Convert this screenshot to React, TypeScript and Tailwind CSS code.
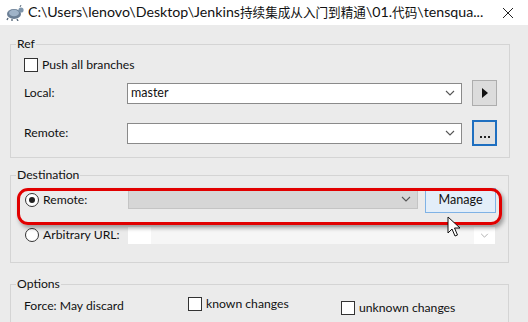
import React from "react";

const font = { fontFamily: 'Lato, "Noto Sans CJK SC", sans-serif' };

function Chevron() {
  return (
    <svg width="10" height="6" viewBox="0 0 10 6" className="shrink-0">
      <path d="M1 1 L5 5 L9 1" fill="none" stroke="#555" strokeWidth="1.1" />
    </svg>
  );
}

function Checkbox() {
  return <div className="w-[14px] h-[14px] border border-[#333] bg-white shrink-0" />;
}

function Radio({ checked }: { checked?: boolean }) {
  return (
    <div className="w-[14px] h-[14px] rounded-full border border-[#333] bg-white shrink-0 flex items-center justify-center">
      {checked && <div className="w-[6px] h-[6px] rounded-full bg-[#222]" />}
    </div>
  );
}

function Combo({ value, w, disabled }: { value?: string; w: string; disabled?: boolean }) {
  return (
    <div
      className={`${w} h-[21px] border flex items-center justify-between pl-[3px] pr-[6px] ${
        disabled ? "bg-[#d6d6d6] border-[#c4c4c4]" : "bg-white border-[#8a8a8a]"
      }`}
    >
      <span className="text-[12.5px] text-[#111] leading-none">{value}</span>
      <Chevron />
    </div>
  );
}

function Cjk({ children }: { children: React.ReactNode }) {
  return <span className="text-[12.6px]">{children}</span>;
}

export default function App() {
  return (
    <div className="w-[528px] h-[322px] bg-[#ebebeb] overflow-hidden text-[#111] text-[12.2px]" style={font}>
      {/* title bar */}
      <div className="h-[25px] bg-white flex items-center pl-[5px] pr-[14px]">
        <svg width="20" height="16" viewBox="0 0 20 16" className="shrink-0">
          <ellipse cx="9" cy="9" rx="7" ry="5" fill="#6b7f95" />
          <ellipse cx="9" cy="8" rx="5" ry="3.2" fill="#9fb3c8" />
          <circle cx="16" cy="5" r="2.6" fill="#7d94aa" />
          <path d="M3 13 L2 15 M7 14 L7 16 M12 14 L13 16" stroke="#5a6b7d" strokeWidth="1.4" />
          <path d="M15 2 L16 0" stroke="#5a6b7d" strokeWidth="1" />
        </svg>
        <span className="ml-[3px] text-[14.2px] text-[#111] whitespace-nowrap leading-none flex-1">
          C:\Users\lenovo\Desktop\Jenkins<Cjk>持续集成从入门到精通</Cjk>\01.<Cjk>代码</Cjk>\tensqua...
        </span>
        <svg width="12" height="12" viewBox="0 0 12 12" className="shrink-0 ml-[8px]">
          <path d="M1 1 L11 11 M11 1 L1 11" stroke="#222" strokeWidth="1" />
        </svg>
      </div>

      {/* Ref */}
      <fieldset className="ml-[10px] mt-[11px] w-[499px] border border-[#d4d4d4] pl-[13px] pr-[12px] pt-[5px] pb-[11px]">
        <legend className="-ml-[8px] px-[1px] leading-[16px]">Ref</legend>
        <div className="h-[16px] flex items-center gap-[4px]">
          <Checkbox />
          <span className="leading-none">Push all branches</span>
        </div>
        <div className="mt-[7px] h-[26px] flex items-center">
          <span className="w-[103px] leading-none">Local:</span>
          <Combo value="master" w="w-[335px]" />
          <div className="ml-[10px] w-[25px] h-[26px] bg-[#dcdcdc] border border-[#adadad] flex items-center justify-center">
            <svg width="6" height="10" viewBox="0 0 6 10">
              <path d="M0 0 L6 5 L0 10 Z" fill="#111" />
            </svg>
          </div>
        </div>
        <div className="mt-[14px] h-[26px] flex items-center">
          <span className="w-[103px] leading-none">Remote:</span>
          <Combo w="w-[335px]" />
          <div className="ml-[10px] w-[25px] h-[26px] bg-[#e1e1e1] border-2 border-[#1e6fc0] flex items-end justify-center gap-[2px] pb-[6px]">
            <div className="w-[2px] h-[2px] bg-[#222]" />
            <div className="w-[2px] h-[2px] bg-[#222]" />
            <div className="w-[2px] h-[2px] bg-[#222]" />
          </div>
        </div>
      </fieldset>

      {/* Destination */}
      <fieldset className="relative ml-[10px] mt-[9px] w-[499px] border border-[#d4d4d4] pl-[14px] pr-[12px] pt-[4px] pb-[18px]">
        <legend className="-ml-[9px] px-[1px] leading-[16px]">Destination</legend>
        <div className="h-[26px] flex items-center">
          <Radio checked />
          <span className="ml-[4px] w-[85px] leading-none whitespace-nowrap">Remote:</span>
          <div className="self-start mt-[1px]">
            <Combo w="w-[290px]" disabled />
          </div>
          <div className="ml-[7px] w-[71px] h-[25px] bg-[#e3eef9] border border-[#7fb2e5] flex items-center justify-center text-[12.6px] leading-none">
            Manage
          </div>
        </div>
        <div className="mt-[13px] h-[18px] flex items-center">
          <Radio />
          <span className="ml-[4px] w-[85px] leading-none whitespace-nowrap">Arbitrary URL:</span>
          <div className="w-[367px] h-[17px] flex items-center">
            <div className="w-[23px] h-full bg-white" />
            <div className="flex-1 h-full bg-[#f6f6f6]" />
            <div className="w-[21px] h-full bg-white flex items-center justify-center">
              <svg width="9" height="5" viewBox="0 0 10 6">
                <path d="M1 1 L5 5 L9 1" fill="none" stroke="#aaa" strokeWidth="1.1" />
              </svg>
            </div>
          </div>
        </div>
        {/* red highlight */}
        <div className="absolute left-[6px] top-[5px] w-[485px] h-[37px] rounded-[11px] border-[3px] border-[#e10000] shadow-[2px_3px_4px_rgba(0,0,0,0.35)] pointer-events-none" />
        {/* cursor */}
        <svg className="absolute left-[436px] top-[33px]" width="14" height="22" viewBox="0 0 14 22">
          <path d="M1 1 L1 17 L5 13 L8 20 L10.5 19 L7.5 12 L13 12 Z" fill="white" stroke="#111" strokeWidth="1" strokeLinejoin="round" />
        </svg>
      </fieldset>

      {/* Options */}
      <fieldset className="ml-[10px] mt-[13px] w-[499px] border border-[#d4d4d4] pl-[13px] pr-[12px] pt-[5px] pb-[10px]">
        <legend className="-ml-[8px] px-[1px] leading-[16px]">Options</legend>
        <div className="h-[18px] flex items-start">
          <span className="w-[164px] leading-[16px] mt-[1px]">Force: May discard</span>
          <div className="w-[153px] flex items-center gap-[4px]">
            <Checkbox />
            <span className="leading-none">known changes</span>
          </div>
          <div className="mt-[4px] flex items-center gap-[4px]">
            <Checkbox />
            <span className="leading-none">unknown changes</span>
          </div>
        </div>
        <div className="mt-[6px] h-[16px] flex items-center">
          <Checkbox />
        </div>
      </fieldset>
    </div>
  );
}
